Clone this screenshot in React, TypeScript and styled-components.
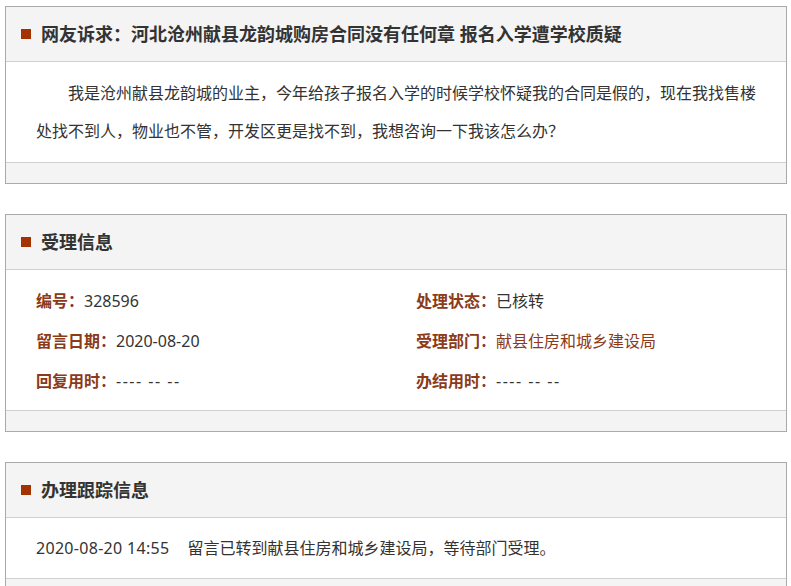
import React from "react";
import styled, { createGlobalStyle } from "styled-components";

const Global = createGlobalStyle`
  html, body { margin: 0; padding: 0; background: #fff; }
  body {
    font-family: "Noto Sans", "Noto Sans CJK SC", "Microsoft YaHei", sans-serif;
    color: #333;
  }
`;

const Page = styled.div`
  padding: 6px 4px 0 5px;
  display: flex;
  flex-direction: column;
  gap: 30px;
`;

const Panel = styled.section`
  border: 1px solid #aaa;
  background: #f4f4f4;
`;

const Header = styled.div`
  height: 54px;
  display: flex;
  align-items: center;
  padding-left: 15px;
  border-bottom: 1px solid #d0d0d0;
  background: #f4f4f4;
`;

const Marker = styled.span`
  width: 10px;
  height: 10px;
  background: #a33300;
  margin-right: 10px;
  flex: none;
`;

const Title = styled.h2`
  margin: 0;
  font-size: 18px;
  font-weight: bold;
  color: #333;
  line-height: 24px;
`;

const Body = styled.div<{ $pad: number }>`
  background: #fff;
  padding: ${(p) => p.$pad}px 30px;
  border-bottom: 1px solid #d0d0d0;
`;

const Footer = styled.div`
  height: 20px;
  background: #f4f4f4;
`;

const Paragraph = styled.p`
  margin: 0;
  font-size: 16px;
  line-height: 38px;
  text-indent: 2em;
  color: #333;
`;

const InfoGrid = styled.div`
  display: grid;
  grid-template-columns: 380px 1fr;
  grid-auto-rows: 40px;
  align-items: center;
`;

const Item = styled.div`
  font-size: 16px;
  color: #333;
  white-space: nowrap;
`;

const Label = styled.span`
  color: #8b3a1a;
  font-weight: bold;
`;

const Value = styled.span<{ $link?: boolean }>`
  color: ${(p) => (p.$link ? "#8b3a1a" : "#333")};
`;

const Dashes = styled.span`
  color: #333;
  letter-spacing: 1.5px;
`;

const TrackRow = styled.div`
  font-size: 16px;
  line-height: 40px;
  color: #333;
  display: flex;
`;

const TrackTime = styled.span`
  letter-spacing: 0.3px;
`;

const TrackMsg = styled.span`
  margin-left: 18px;
`;

export default function App() {
  return (
    <>
      <Global />
      <Page>
        <Panel>
          <Header>
            <Marker />
            <Title>网友诉求：河北沧州献县龙韵城购房合同没有任何章 报名入学遭学校质疑</Title>
          </Header>
          <Body $pad={12}>
            <Paragraph>
              我是沧州献县龙韵城的业主，今年给孩子报名入学的时候学校怀疑我的合同是假的，现在我找售楼处找不到人，物业也不管，开发区更是找不到，我想咨询一下我该怎么办？
            </Paragraph>
          </Body>
          <Footer />
        </Panel>

        <Panel>
          <Header>
            <Marker />
            <Title>受理信息</Title>
          </Header>
          <Body $pad={10}>
            <InfoGrid>
              <Item>
                <Label>编号：</Label>
                <Value>328596</Value>
              </Item>
              <Item>
                <Label>处理状态：</Label>
                <Value>已核转</Value>
              </Item>
              <Item>
                <Label>留言日期：</Label>
                <Value>2020-08-20</Value>
              </Item>
              <Item>
                <Label>受理部门：</Label>
                <Value $link>献县住房和城乡建设局</Value>
              </Item>
              <Item>
                <Label>回复用时：</Label>
                <Dashes>---- -- --</Dashes>
              </Item>
              <Item>
                <Label>办结用时：</Label>
                <Dashes>---- -- --</Dashes>
              </Item>
            </InfoGrid>
          </Body>
          <Footer />
        </Panel>

        <Panel>
          <Header>
            <Marker />
            <Title>办理跟踪信息</Title>
          </Header>
          <Body $pad={10}>
            <TrackRow>
              <TrackTime>2020-08-20 14:55</TrackTime>
              <TrackMsg>留言已转到献县住房和城乡建设局，等待部门受理。</TrackMsg>
            </TrackRow>
          </Body>
          <Footer />
        </Panel>
      </Page>
    </>
  );
}
